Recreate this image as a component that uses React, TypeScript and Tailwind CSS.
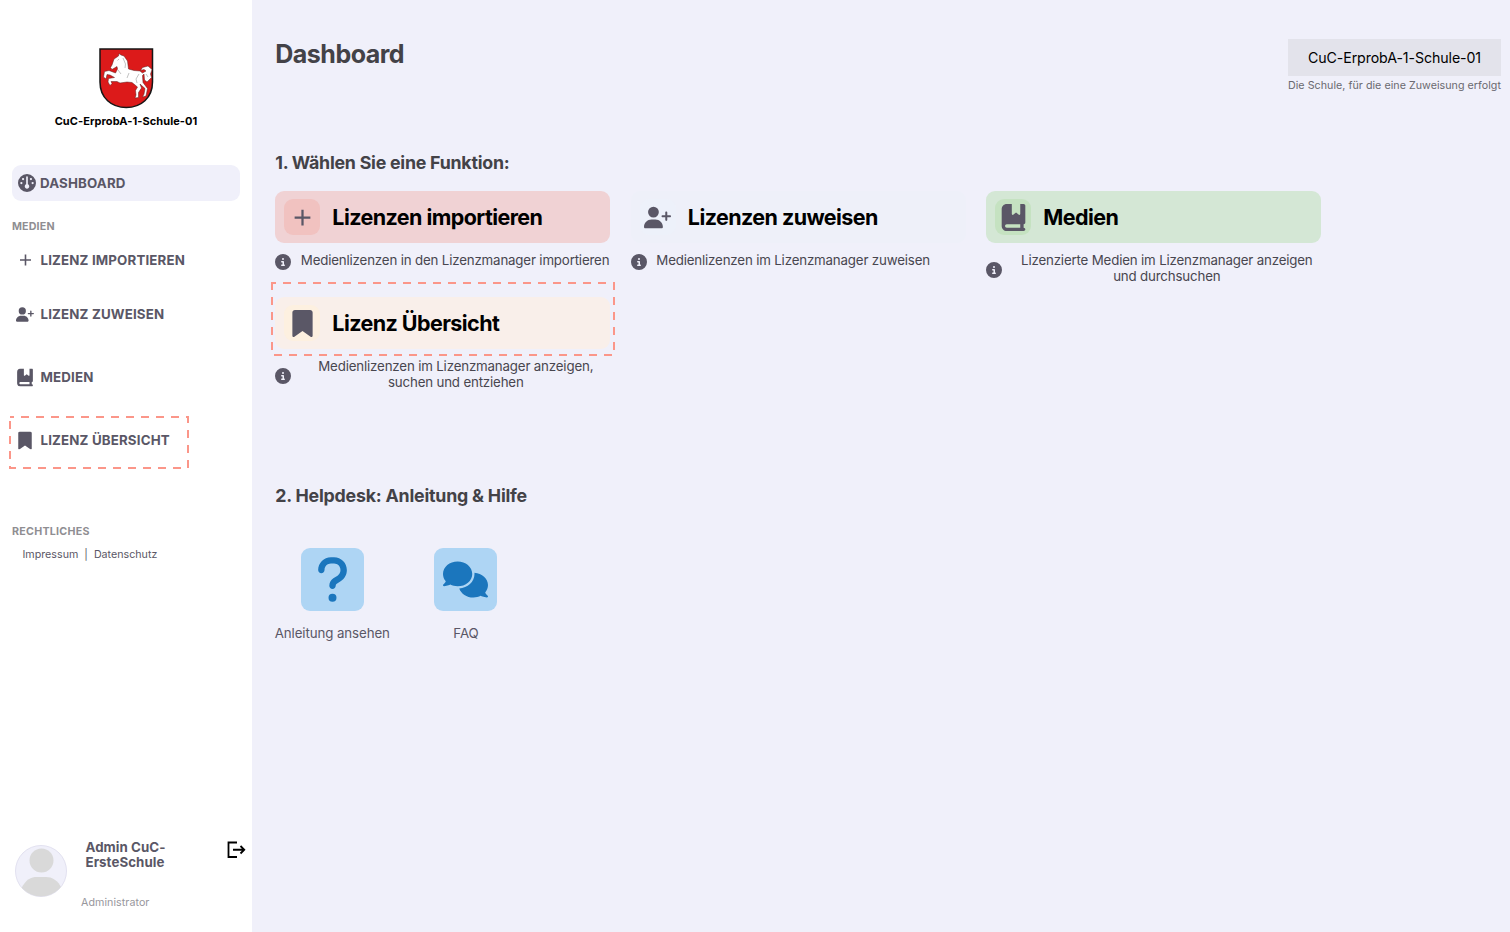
import type { ReactNode } from "react";
import { FaGauge, FaUserPlus, FaBookBookmark, FaBookmark, FaCircleInfo, FaQuestion, FaComments } from "react-icons/fa6";
import { MdAdd } from "react-icons/md";

function Crest() {
  return (
    <svg className="block h-[61px] w-[55px]" viewBox="0 0 55 61">
      <path d="M1 1H53.500V34C53.500 50 42 59.500 27.250 59.500S1 50 1 34Z" fill="#dc1a1a" stroke="#161616" strokeWidth="1.500" />
      <path
        d="M20 5.500L19.500 8L15 11L13 17L11.500 19.500L13 21.500L18 18.500L18.500 21L16.500 25L10 22.500L5.500 23.500L4.500 29L7 31L8 26.500L11 27L15.500 29.500L9.500 30.500L9 34L11 37.500L13 35.500L12 33.500L18 33.500L21 35L28 34L33 34.500L38.500 39L36.500 42.500L37 47L36 50L39.500 49.500L39.500 44.500L42.500 40L41 36L46 40.500L45 46L43.500 49L47 48L48.500 40.500L44 34.500L43.500 27.500L45 26L45.500 32L48 34L52.500 29.500L51.500 26L53 21.500L49 18L43.500 19.500L41.500 22.500L45 21.500L47 23L43.500 25L41 23L35 22.500L29.500 21L28.500 13L25 8L22 7Z"
        fill="#fff"
        stroke="#5a2020"
        strokeWidth=".5"
        strokeLinejoin="round"
      />
      <path d="M24 10L26.500 16L26 20M19 22L22 26M30 25L28 30M40 26L37 31L38 35M20 11L18.500 12.500M47 26L49 29" fill="none" stroke="#999" strokeWidth=".6" />
    </svg>
  );
}

function NavItem({ icon, label }: { icon: ReactNode; label: string }) {
  return (
    <div className="flex h-5 items-center">
      <span className="flex w-[26px] -translate-y-[0.5px] justify-center">{icon}</span>
      <span className="ml-[2.500px] whitespace-nowrap">{label}</span>
    </div>
  );
}

function Dashed({ width, height }: { width: number; height: number }) {
  return (
    <svg className="block" width={width} height={height}>
      <rect x="1" y="1" width={width - 2} height={height - 2} fill="none" stroke="#fb9689" strokeWidth="2" strokeDasharray="8 7" strokeDashoffset="4" />
    </svg>
  );
}

type CardProps = { icon: ReactNode; title: string; lines: string[]; bg: string; iconBg: string; dashed?: boolean };

function Card({ icon, title, lines, bg, iconBg, dashed }: CardProps) {
  return (
    <div className="relative w-[335px]">
      <div className={`flex h-[52px] items-center rounded-[9px] pl-[9px] ${bg}`}>
        <span className={`flex size-9 items-center justify-center rounded-[9px] text-[#5a5766] ${iconBg}`}>{icon}</span>
        <span className="ml-3 text-[21.500px] font-bold tracking-[-0.57px] text-black">{title}</span>
      </div>
      <div className="mt-[9px] flex items-center">
        <FaCircleInfo className="size-4 shrink-0 translate-y-[2px] text-[#5a5766]" />
        <p className={`text-[13.300px] leading-4 tracking-[-0.17px] text-[#48464f] ${lines.length > 1 ? "flex-1 pl-[10px] text-center" : "pl-[9.500px]"}`}>
          {lines.map((l) => (
            <span key={l} className="block whitespace-nowrap">{l}</span>
          ))}
        </p>
      </div>
      {dashed && (
        <div className="absolute -top-[15px] -left-[4px]"><Dashed width={344} height={74} /></div>
      )}
    </div>
  );
}

function HelpTile({ icon, label, width }: { icon: ReactNode; label: string; width: string }) {
  return (
    <div className={`flex flex-col items-center ${width}`}>
      <div className="flex size-[63px] items-center justify-center rounded-[9px] bg-[#aed5f4] text-[#1b76bd]">{icon}</div>
      <span className="mt-3 text-[13.300px] leading-5 tracking-[-0.1px] whitespace-nowrap text-[#5a5766]">{label}</span>
    </div>
  );
}

export default function App() {
  return (
    <div className="flex h-[932px] w-[1510px] overflow-hidden bg-[#f0f0fa] font-['Inter',sans-serif]">
      <aside className="flex w-[252px] shrink-0 flex-col bg-white pt-[47.500px]">
        <div className="flex flex-col items-center">
          <Crest />
          <span className="mt-1 text-[11px] leading-4 font-bold tracking-[0.07px] text-black">CuC-ErprobA-1-Schule-01</span>
        </div>
        <nav className="flex flex-col px-3 text-[13.300px] font-bold tracking-[0.16px] text-[#5a5766]">
          <div className="mt-9 flex h-9 items-center rounded-[9px] bg-[#f0f0fa]">
            <FaGauge className="ml-1.5 size-[18px]" />
            <span className="mt-[2px] ml-1">DASHBOARD</span>
          </div>
          <span className="mt-[18px] text-[10.700px] leading-4 tracking-[0.15px] text-[#8f8e92]">MEDIEN</span>
          <div className="mt-4 flex flex-col">
            <NavItem icon={<MdAdd className="size-[19px]" />} label="LIZENZ IMPORTIEREN" />
            <div className="mt-[34px]"><NavItem icon={<FaUserPlus className="size-[18px]" />} label="LIZENZ ZUWEISEN" /></div>
            <div className="mt-[43px]"><NavItem icon={<FaBookBookmark className="size-[18px]" />} label="MEDIEN" /></div>
            <div className="relative mt-[43px]">
              <NavItem icon={<FaBookmark className="size-[18px]" />} label="LIZENZ ÜBERSICHT" />
              <div className="absolute -top-[14.500px] -left-[3px]"><Dashed width={180} height={53} /></div>
            </div>
          </div>
          <span className="mt-[73px] text-[10.700px] leading-4 tracking-[0.25px] text-[#8f8e92]">RECHTLICHES</span>
        </nav>
        <div className="mt-[7px] ml-[22.500px] flex gap-[6px] text-[10.700px] leading-4 text-[#5a5766]">
          <span>Impressum</span><span>|</span><span>Datenschutz</span>
        </div>
        <div className="mt-auto mb-[21px] flex h-[71px]">
          <svg className="mt-[5px] ml-[15px] size-[52px] shrink-0" viewBox="0 0 52 52">
            <clipPath id="avatar"><circle cx="26" cy="26" r="25.500" /></clipPath>
            <circle cx="26" cy="26" r="25.500" fill="#f0f0fa" stroke="#e2e1f0" />
            <g clipPath="url(#avatar)" fill="#d9d9d9">
              <circle cx="26.500" cy="15.500" r="12" />
              <path d="M6 44C11 34 16 32 22 32H31C37 32 43 35 47 44L43 52H10Z" />
            </g>
          </svg>
          <div className="ml-[14px] flex flex-1 flex-col">
            <span className="ml-[4.500px] text-[13.300px] leading-[15px] font-bold tracking-[0.06px] text-[#5a5766]">Admin CuC-<br />ErsteSchule</span>
            <span className="mt-[25px] text-[10.700px] leading-4 tracking-[0.05px] text-[#98979d]">Administrator</span>
          </div>
          <svg className="mt-[0.5px] mr-[6px] h-[18px] w-[19px]" viewBox="0 0 19 18" fill="none" stroke="#000" strokeWidth="1.800">
            <path d="M10 1.500H1.500V16H10M6 8.750H17M13.500 5L17.250 8.750L13.500 12.500" />
          </svg>
        </div>
      </aside>
      <main className="flex-1 pl-[23.300px]">
        <header className="flex h-[112px] justify-between pr-[9px]">
          <h1 className="mt-9 text-[25px] leading-9 font-bold tracking-[-0.5px] text-[#434247]">Dashboard</h1>
          <div className="mt-[39px] w-[213px]">
            <div className="flex h-[37px] items-center justify-center bg-[#e3e3eb] text-[14.200px] tracking-[-0.1px] text-black">CuC-ErprobA-1-Schule-01</div>
            <p className="mt-[2px] text-[10.700px] leading-4 tracking-[0.035px] whitespace-nowrap text-[#6a6970]">Die Schule, für die eine Zuweisung erfolgt</p>
          </div>
        </header>
        <section className="pt-[39px]">
          <h2 className="text-[17.800px] leading-6 font-bold tracking-[-0.24px] text-[#434247]">1. Wählen Sie eine Funktion:</h2>
          <div className="mt-4 grid w-max grid-cols-3 gap-x-[20.500px] gap-y-[13px]">
            <Card icon={<MdAdd className="size-[27px]" />} title="Lizenzen importieren" lines={["Medienlizenzen in den Lizenzmanager importieren"]} bg="bg-[#f0d2d4]" iconBg="bg-[#f1c2c0]" />
            <Card icon={<FaUserPlus className="size-[27px]" />} title="Lizenzen zuweisen" lines={["Medienlizenzen im Lizenzmanager zuweisen"]} bg="bg-[#eef0f9]" iconBg="bg-[#edf1fa]" />
            <Card icon={<FaBookBookmark className="size-[27px]" />} title="Medien" lines={["Lizenzierte Medien im Lizenzmanager anzeigen", "und durchsuchen"]} bg="bg-[#d4e7d5]" iconBg="bg-[#c5e2c1]" />
            <Card dashed icon={<FaBookmark className="size-[27px]" />} title="Lizenz Übersicht" lines={["Medienlizenzen im Lizenzmanager anzeigen,", "suchen und entziehen"]} bg="bg-[#f9efea]" iconBg="bg-[#fdf0e0]" />
          </div>
        </section>
        <section className="mt-[94px]">
          <h2 className="text-[17.800px] leading-6 font-bold tracking-[-0.21px] text-[#434247]">2. Helpdesk: Anleitung &amp; Hilfe</h2>
          <div className="mt-10 flex gap-[45.200px]">
            <HelpTile width="w-[114px]" icon={<FaQuestion className="size-[51px]" />} label="Anleitung ansehen" />
            <HelpTile width="w-[63px]" icon={<FaComments className="size-[45px]" />} label="FAQ" />
          </div>
        </section>
      </main>
    </div>
  );
}
